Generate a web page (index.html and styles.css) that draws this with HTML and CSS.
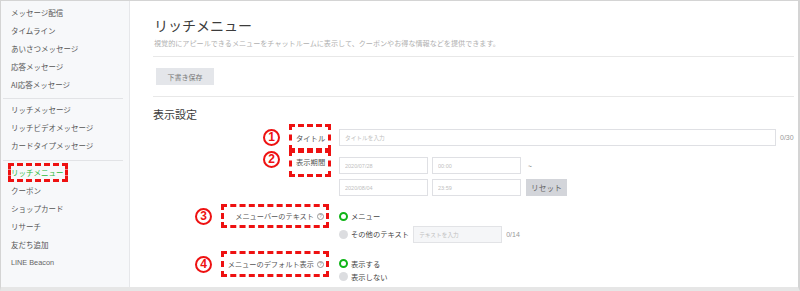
FILE: index.html
```html
<!DOCTYPE html>
<html>

<head>
    <title>リッチメニュー</title>
    <meta charset="utf-8">
    <link rel="stylesheet" href="styles.css">
</head>

<body>
    <div class="frame">
        <aside class="sidebar">
            <ul>
                <li>メッセージ配信</li>
                <li>タイムライン</li>
                <li>あいさつメッセージ</li>
                <li>応答メッセージ</li>
                <li>AI応答メッセージ</li>
            </ul>
            <hr>
            <ul>
                <li>リッチメッセージ</li>
                <li>リッチビデオメッセージ</li>
                <li>カードタイプメッセージ</li>
            </ul>
            <hr class="hr2">
            <ul>
                <li class="aktiv"><span class="mark">リッチメニュー</span></li>
                <li>クーポン</li>
                <li>ショップカード</li>
                <li>リサーチ</li>
                <li>友だち追加</li>
                <li class="latin">LINE Beacon</li>
            </ul>
        </aside>

        <main class="indhold">
            <h1>リッチメニュー</h1>
            <p class="beskrivelse">視覚的にアピールできるメニューをチャットルームに表示して、クーポンやお得な情報などを提供できます。</p>
            <hr class="linje">
            <button class="gem">下書き保存</button>
            <hr class="linje linje2">
            <h2>表示設定</h2>

            <div class="raekke r1">
                <div class="etiket">
                    <span class="nr">1</span>
                    <span class="boks">タイトル</span>
                </div>
                <div class="felt">
                    <input class="titel" type="text" placeholder="タイトルを入力">
                    <span class="taeller">0/30</span>
                </div>
            </div>

            <div class="raekke r2">
                <div class="etiket">
                    <span class="nr">2</span>
                    <span class="boks">表示期間</span>
                </div>
                <div class="felt datoer">
                    <div class="linje-dato">
                        <input class="lille" type="text" placeholder="2020/07/28">
                        <input class="lille" type="text" placeholder="00:00">
                        <span class="tilde">~</span>
                    </div>
                    <div class="linje-dato">
                        <input class="lille" type="text" placeholder="2020/08/04">
                        <input class="lille" type="text" placeholder="23:59">
                        <button class="nulstil">リセット</button>
                    </div>
                </div>
            </div>

            <div class="raekke r3">
                <div class="etiket">
                    <span class="nr">3</span>
                    <span class="boks bred">メニューバーのテキスト<i class="hjaelp">?</i></span>
                </div>
                <div class="felt valg">
                    <label class="radio"><span class="prik til"></span>メニュー</label>
                    <label class="radio"><span class="prik"></span>その他のテキスト
                        <input class="andet" type="text" placeholder="テキストを入力" disabled>
                        <span class="taeller">0/14</span>
                    </label>
                </div>
            </div>

            <div class="raekke r4">
                <div class="etiket">
                    <span class="nr">4</span>
                    <span class="boks bred">メニューのデフォルト表示<i class="hjaelp">?</i></span>
                </div>
                <div class="felt valg">
                    <label class="radio"><span class="prik til"></span>表示する</label>
                    <label class="radio"><span class="prik"></span>表示しない</label>
                </div>
            </div>
        </main>
    </div>
</body>

</html>
```

FILE: styles.css
```css
html,
body {
    margin: 0;
    padding: 0;
    background-color: #ffffff;
}

body {
    font-family: "Noto Sans CJK JP", "Noto Sans", sans-serif;
    color: #555555;
}

.frame {
    display: flex;
    width: 800px;
    height: 291px;
    box-sizing: border-box;
    border-top: 1px solid #d4d4d4;
    border-left: 1px solid #d4d4d4;
    border-right: 2px solid #d4d4d4;
    border-bottom: 4px solid #e6e6e6;
    overflow: hidden;
}

/* menu til venstre */
.sidebar {
    width: 128px;
    flex-shrink: 0;
    background-color: #f7f8fa;
    border-right: 1px solid #e6e7ea;
    padding-top: 3px;
}

.sidebar ul {
    list-style: none;
    margin: 0;
    padding: 0;
}

.sidebar li {
    font-size: 7.5px;
    line-height: 18px;
    height: 18px;
    padding-left: 10px;
    color: #555555;
    white-space: nowrap;
}

.sidebar li.latin {
    font-family: "Liberation Sans", sans-serif;
    font-size: 7.3px;
    color: #666666;
}

.sidebar hr {
    border: none;
    border-top: 1px solid #e2e3e6;
    margin: 4px 6px 2px 2px;
}

.sidebar hr.hr2 {
    margin-top: 5px;
    margin-bottom: 3px;
}

.aktiv {
    color: #2cb83c !important;
}

.mark {
    border: 3px dashed #ee1111;
    margin-left: -3px;
    padding: 1px 1px 1px 0;
}

/* indhold */
.indhold {
    flex: 1;
    padding: 0 7px 0 24px;
}

h1 {
    margin: 0;
    padding-top: 14px;
    font-size: 14px;
    line-height: 20px;
    font-weight: 400;
    color: #3c3c3c;
}

.beskrivelse {
    margin: 3px 0 0 0;
    font-size: 7.1px;
    line-height: 10px;
    color: #b0b0b0;
    white-space: nowrap;
}

.linje {
    border: none;
    border-top: 1px solid #e8e8e8;
    margin: 8px 0 0 -1px;
}

.linje2 {
    margin-top: 11px;
}

.gem {
    display: block;
    margin: 11px 0 0 2px;
    width: 58px;
    height: 17px;
    border: none;
    background-color: #e4e6ea;
    color: #777777;
    font-family: "Noto Sans CJK JP", sans-serif;
    font-size: 7px;
    padding: 0;
}

h2 {
    margin: 10px 0 0 -1px;
    font-size: 11px;
    line-height: 14px;
    font-weight: 400;
    color: #3c3c3c;
}

/* formular */
.raekke {
    display: flex;
    align-items: flex-start;
}

.etiket {
    width: 177px;
    flex-shrink: 0;
    display: flex;
    justify-content: flex-end;
    align-items: center;
    gap: 9px;
}

.felt {
    margin-left: 8px;
    display: flex;
    align-items: center;
}

.nr {
    width: 13px;
    height: 13px;
    border: 2.5px solid #ee1111;
    border-radius: 50%;
    color: #ee1111;
    font-family: "Liberation Sans", sans-serif;
    font-weight: bold;
    font-size: 12px;
    line-height: 13px;
    text-align: center;
}

.boks {
    border: 3px dashed #ee1111;
    box-sizing: border-box;
    font-size: 7.3px;
    color: #555555;
    display: flex;
    align-items: center;
    white-space: nowrap;
}

.r1 {
    margin-top: 3px;
}

.r1 .boks,
.r2 .boks {
    width: 42px;
    height: 27px;
    padding-left: 4px;
}

.r1 .felt {
    height: 27px;
}

.r2 .etiket {
    margin-top: -1px;
    align-items: flex-start;
}

.r2 .boks {
    align-items: flex-start;
    padding-top: 4px;
}

.r2 .nr {
    margin-top: 1px;
}

input {
    box-sizing: border-box;
    border: 1px solid #dfe0e4;
    background-color: #ffffff;
    height: 17px;
    padding: 0 5px;
    font-family: "Noto Sans CJK JP", sans-serif;
    font-size: 5.7px;
    outline: none;
}

input::placeholder {
    color: #c0c0c0;
}

.titel {
    width: 437px;
}

.taeller {
    margin-left: 4px;
    font-family: "Liberation Sans", sans-serif;
    font-size: 7px;
    color: #999999;
}

.datoer {
    flex-direction: column;
    align-items: flex-start;
    gap: 5px;
    margin-top: 6px;
}

.linje-dato {
    display: flex;
    align-items: center;
    gap: 4px;
}

.lille {
    width: 89px;
    font-family: "Liberation Sans", sans-serif;
    font-size: 5.5px;
}

.tilde {
    margin-left: 3px;
    font-size: 7px;
    color: #777777;
}

.nulstil {
    width: 41px;
    height: 17px;
    margin-left: 1px;
    border: none;
    padding: 0;
    background-color: #d3d5da;
    color: #666666;
    font-family: "Noto Sans CJK JP", sans-serif;
    font-size: 7.7px;
}

.bred {
    width: 108px;
    height: 24px;
    justify-content: flex-end;
    padding-right: 2px;
    font-size: 7.2px;
}

.hjaelp {
    display: inline-flex;
    justify-content: center;
    align-items: center;
    width: 5px;
    height: 5px;
    margin-left: 3px;
    border: 0.8px solid #999999;
    border-radius: 50%;
    font-style: normal;
    font-family: "Liberation Sans", sans-serif;
    font-size: 4.5px;
    line-height: 5px;
    color: #888888;
}

.r3 {
    margin-top: 8px;
}

.r3 .etiket,
.r4 .etiket {
    padding-right: 2px;
    box-sizing: border-box;
}

.r4 .bred {
    height: 26px;
}

.valg {
    flex-direction: column;
    align-items: flex-start;
    margin-left: 8px;
}

.r3 .valg {
    padding-top: 3px;
}

.radio {
    display: flex;
    align-items: center;
    font-size: 7.3px;
    color: #444444;
    white-space: nowrap;
}

.r3 .radio {
    height: 18px;
}

.r4 {
    margin-top: 8px;
}

.r4 .valg {
    padding-top: 6px;
}

.r4 .radio {
    height: 13px;
}

.prik {
    width: 9px;
    height: 9px;
    box-sizing: border-box;
    border-radius: 50%;
    background-color: #dcdde0;
    margin-right: 3px;
}

.prik.til {
    background-color: #ffffff;
    border: 2.5px solid #10b418;
}

.andet {
    width: 89px;
    margin-left: 4px;
    background-color: #f5f6f8;
    border-color: #e2e3e6;
}

.andet + .taeller {
    margin-left: 4px;
}
```
